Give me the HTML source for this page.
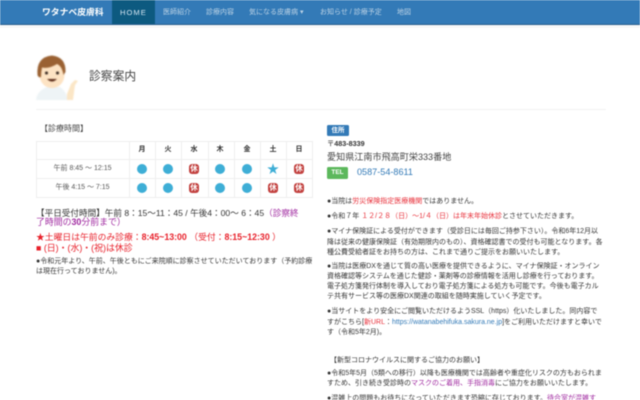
<!DOCTYPE html>
<html lang="ja"><head><meta charset="utf-8"><style>
html,body{margin:0;padding:0;width:640px;height:400px;overflow:hidden;background:#fff}
body{font-family:"Liberation Sans","Noto Sans CJK JP",sans-serif;color:#333;position:relative}
#w{position:absolute;left:0;top:0;width:640px;height:400px;overflow:hidden;filter:blur(.45px)}
.t{position:absolute;white-space:nowrap;font-size:7px;line-height:10px;color:#333}
.r{color:#e8303a}.p{color:#a02aa0}.b{font-weight:bold}
.d{position:absolute;width:10px;height:10px;border-radius:50%;background:#3eaed6}
.k{position:absolute;width:10px;height:10px;border-radius:3px;background:#c2403e;color:#fff;font-size:7.5px;line-height:10px;text-align:center;font-weight:bold}
.l{position:absolute;background:#eee}
.n{font-size:7px;line-height:11px;color:#bcd3e6;top:7px}
.w{top:145px;width:26px;text-align:center;font-weight:bold}
</style></head><body><div id="w">
<div style="position:absolute;left:0;top:0;width:640px;height:24px;background:#337ab7;border-bottom:1px solid #285e8e"></div>
<div style="position:absolute;left:0;top:25px;width:640px;height:3px;background:#f8f8f8"></div>
<div style="position:absolute;left:112px;top:0;width:43px;height:24px;background:#0d5a80"></div>
<div class="t" style="left:42px;top:7px;font-size:8.8px;line-height:11px;color:#fff;font-weight:bold">ワタナベ皮膚科</div>
<div class="t" style="left:120px;top:7px;font-size:7.6px;line-height:11px;color:#d5e6f2;letter-spacing:1px">HOME</div>
<div class="t n" style="left:163px">医師紹介</div>
<div class="t n" style="left:206px">診療内容</div>
<div class="t n" style="left:249px">気になる皮膚病 ▾</div>
<div class="t n" style="left:320px">お知らせ / 診療予定</div>
<div class="t n" style="left:397px">地図</div>

<svg style="position:absolute;left:34px;top:54px;filter:blur(.5px)" width="46" height="48" viewBox="0 0 46 48">
<path d="M2 46 Q3 37 13 33 L26 33 Q32 37 34 46Z" fill="#eef4f6"/>
<path d="M33 40 L37 30 L41 26 L44 27 L41 31 L39 46 L33 46Z" fill="#fbe6c6"/>
<ellipse cx="18" cy="21" rx="12.5" ry="13" fill="#fde3c3"/>
<path d="M3.5 21 Q2 3 18 1.5 Q32 3 31.5 18 L29.5 21 Q28 12 23 10 Q15 15 8 13.5 Q7 18 7 23 Q4.5 24 3.5 21Z" fill="#9a6132"/>
<circle cx="12.5" cy="19" r="1.5" fill="#33261c"/><circle cx="23.5" cy="19" r="1.5" fill="#33261c"/>
<path d="M13 25 Q18 30 23 25Z" fill="#5a2b18"/>
</svg>
<div class="t" style="left:89px;top:69px;font-size:11.8px;line-height:15px;color:#444">診察案内</div>
<div class="l" style="left:36px;top:109px;width:570px;height:1px;background:#f1f1f1"></div>

<div class="t" style="left:40px;top:124px;font-size:8px;color:#444">【診療時間】</div>
<div class="l" style="left:36px;top:141px;width:277px;height:1px"></div>
<div class="l" style="left:36px;top:159px;width:277px;height:1px"></div>
<div class="l" style="left:36px;top:178px;width:277px;height:1px"></div>
<div class="l" style="left:36px;top:197px;width:277px;height:1px"></div>
<div class="l" style="left:36px;top:141px;width:1px;height:57px"></div>
<div class="l" style="left:129px;top:141px;width:1px;height:57px"></div>
<div class="l" style="left:155px;top:141px;width:1px;height:57px"></div>
<div class="l" style="left:181px;top:141px;width:1px;height:57px"></div>
<div class="l" style="left:208px;top:141px;width:1px;height:57px"></div>
<div class="l" style="left:234px;top:141px;width:1px;height:57px"></div>
<div class="l" style="left:260px;top:141px;width:1px;height:57px"></div>
<div class="l" style="left:286px;top:141px;width:1px;height:57px"></div>
<div class="l" style="left:312px;top:141px;width:1px;height:57px"></div>
<div class="t w" style="left:129px">月</div>
<div class="t w" style="left:155px">火</div>
<div class="t w" style="left:181px">水</div>
<div class="t w" style="left:207px">木</div>
<div class="t w" style="left:234px">金</div>
<div class="t w" style="left:260px">土</div>
<div class="t w" style="left:286px">日</div>
<div class="t" style="left:36px;top:164px;width:93px;text-align:center;color:#555">午前 8:45 ～ 12:15</div>
<div class="t" style="left:36px;top:183px;width:93px;text-align:center;color:#555">午後 4:15 ～ 7:15</div>
<div class="d" style="left:137px;top:164px"></div><div class="d" style="left:163px;top:164px"></div>
<div class="k" style="left:189px;top:164px">休</div>
<div class="d" style="left:215px;top:164px"></div><div class="d" style="left:242px;top:164px"></div>
<div class="t" style="left:267px;top:162px;font-size:12px;line-height:14px;color:#3eaed6">★</div>
<div class="k" style="left:294px;top:164px">休</div>
<div class="d" style="left:137px;top:183px"></div><div class="d" style="left:163px;top:183px"></div>
<div class="k" style="left:189px;top:183px">休</div>
<div class="d" style="left:215px;top:183px"></div><div class="d" style="left:242px;top:183px"></div>
<div class="k" style="left:268px;top:183px">休</div>
<div class="k" style="left:294px;top:183px">休</div>

<div class="t" style="left:36px;top:207px;font-size:8.6px;line-height:12px">【平日受付時間】午前 8：15～11：45 / 午後4：00～ 6：45<span class="p">（診察終</span></div>
<div class="t p" style="left:36px;top:216px;font-size:8.9px;line-height:12px">了時間の<b>30</b>分前まで）</div>
<div class="t" style="left:36px;top:231px;font-size:8.8px;line-height:12px;color:#e8202a">★土曜日は午前のみ診療：<b>8:45~13:00</b> （受付：<b>8:15~12:30</b> ）</div>
<div class="t" style="left:36px;top:242px;font-size:8.9px;line-height:12px;color:#e8202a"><b>■</b> (日)・(水)・(祝)は休診</div>
<div class="t" style="left:36px;top:257px">●令和元年より、午前、午後ともにご来院順に診察させていただいております（予約診療</div>
<div class="t" style="left:36px;top:267px">は現在行っておりません)。</div>

<div style="position:absolute;left:327px;top:125px;width:22px;height:11px;background:#337ab7;border-radius:1.5px;color:#fff;font-size:6.5px;line-height:11px;text-align:center;font-weight:bold">住所</div>
<div class="t" style="left:327px;top:139px;font-size:7.2px">〒<b>483-8339</b></div>
<div class="t" style="left:327px;top:151px;font-size:9.1px;line-height:12px;color:#444">愛知県江南市飛高町栄333番地</div>
<div style="position:absolute;left:327px;top:167px;width:21px;height:12px;background:#5cb85c;border-radius:1.5px;color:#fff;font-size:6.5px;line-height:12px;text-align:center;font-weight:bold">TEL</div>
<div class="t" style="left:357px;top:166px;font-size:9.1px;line-height:12px;color:#337ab7">0587-54-8611</div>

<div class="t" style="left:327px;top:197px">●当院は<span class="r">労災保険指定医療機関</span>ではありません。</div>
<div class="t" style="left:327px;top:212px">●令和７年 <span class="r">１２/２８（日）～1/４（日）は年末年始休診</span>とさせていただきます。</div>
<div class="t" style="left:327px;top:227px">●マイナ保険証による受付ができます（受診日には毎回ご持参下さい）。令和6年12月以</div>
<div class="t" style="left:327px;top:238px">降は従来の健康保険証（有効期限内のもの）、資格確認書での受付も可能となります。各</div>
<div class="t" style="left:327px;top:248px">種公費受給者証をお持ちの方は、これまで通りご提示をお願いいたします。</div>
<div class="t" style="left:327px;top:262px">●当院は医療DXを通じて質の高い医療を提供できるように、マイナ保険証・オンライン</div>
<div class="t" style="left:327px;top:272px">資格確認等システムを通じた健診・薬剤等の診療情報を活用し診療を行っております。</div>
<div class="t" style="left:327px;top:282px">電子処方箋発行体制を導入しており電子処方箋による処方も可能です。今後も電子カル</div>
<div class="t" style="left:327px;top:292px">テ共有サービス等の医療DX関連の取組を随時実施していく予定です。</div>
<div class="t" style="left:327px;top:307px">●当サイトをより安全にご閲覧いただけるようSSL（https）化いたしました。同内容で</div>
<div class="t" style="left:327px;top:318px">すがこちら[<span class="r">新URL</span>：<span style="color:#337ab7">https://watanabehifuka.sakura.ne.jp</span>]をご利用いただけますと幸いで</div>
<div class="t" style="left:327px;top:328px">す（令和5年2月)。</div>
<div class="t" style="left:330px;top:356px">【新型コロナウイルスに関するご協力のお願い】</div>
<div class="t" style="left:327px;top:369px">●令和5年5月（5類への移行）以降も医療機関では高齢者や重症化リスクの方もおられま</div>
<div class="t" style="left:327px;top:379px">すため、引き続き受診時の<span class="p">マスクのご着用、手指消毒</span>にご協力をお願いいたします。</div>
<div class="t" style="left:327px;top:394px">●混雑上の問題もお待ちになっていただきます恐縮に存じております。<span class="p">待合室が混雑す</span></div>
</div></body></html>
